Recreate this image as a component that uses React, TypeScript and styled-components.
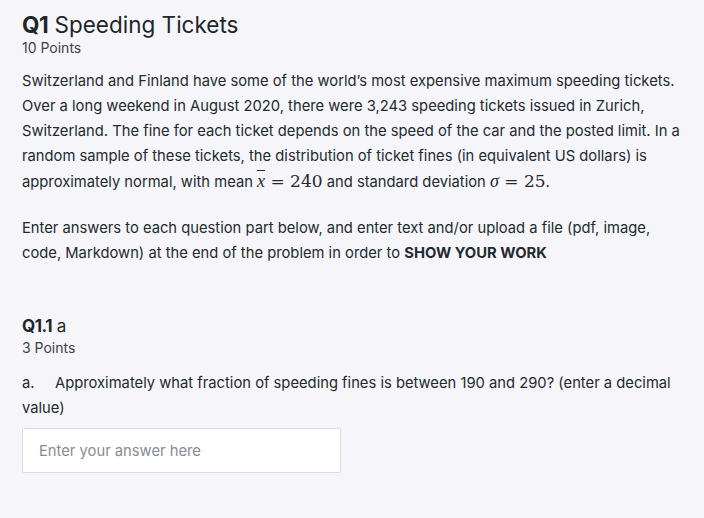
import React from 'react'
import styled, { createGlobalStyle } from 'styled-components'

const GlobalStyle = createGlobalStyle`
  html, body {
    margin: 0;
    padding: 0;
    background: #f6f6fa;
  }
  body {
    font-family: Inter, 'Open Sans', sans-serif;
    color: #222a2e;
  }
`

const Page = styled.div`
  width: 704px;
  height: 518px;
  box-sizing: border-box;
  padding: 11px 18px 0 22px;
  overflow: hidden;
`

const Title = styled.h1<{ size: number }>`
  margin: 0;
  font-size: ${({ size }) => size}px;
  font-weight: 400;
  line-height: 1.2;
  color: #1d2628;

  b {
    font-weight: 700;
    letter-spacing: -0.5px;
  }
`

const Points = styled.div<{ top?: number }>`
  margin-top: ${({ top = 0 }) => top}px;
  font-size: 14px;
  line-height: 19px;
  color: #3c4245;
`

const Para = styled.p<{ top: number }>`
  margin: ${({ top }) => top}px 0 0 0;
  font-size: 14.75px;
  line-height: 25px;

  strong {
    font-weight: 700;
  }
`

const Math = styled.span`
  font-family: 'DejaVu Serif', 'Liberation Serif', serif;
  font-size: 17px;

  i {
    font-family: 'Liberation Serif', serif;
    font-size: 18px;
  }
`

const Bar = styled.span`
  text-decoration: overline;
`

const Section = styled.section`
  margin-top: 50px;
`

const Label = styled.span`
  display: inline-block;
  width: 33px;
`

const Answer = styled.input`
  display: block;
  margin-top: 7px;
  width: 319px;
  height: 45px;
  box-sizing: border-box;
  padding: 0 16px;
  border: 1px solid #dcdde2;
  border-radius: 2px;
  background: #ffffff;
  font-family: Inter, 'Open Sans', sans-serif;
  font-size: 14.75px;
  color: #222a2e;
  outline: none;

  &::placeholder {
    color: #868c92;
  }
`

export default function App() {
  return (
    <>
      <GlobalStyle />
      <Page>
        <Title size={22.5}>
          <b>Q1</b> Speeding Tickets
        </Title>
        <Points>10 Points</Points>
        <Para top={12}>
          Switzerland and Finland have some of the world’s most expensive maximum speeding tickets.
          Over a long weekend in August 2020, there were 3,243 speeding tickets issued in Zurich,
          Switzerland. The fine for each ticket depends on the speed of the car and the posted limit.
          In a random sample of these tickets, the distribution of ticket fines (in equivalent US
          dollars) is approximately normal, with mean{' '}
          <Math>
            <i>
              <Bar>x</Bar>
            </i>{' '}
            = 240
          </Math>{' '}
          and standard deviation{' '}
          <Math>
            <i>σ</i> = 25
          </Math>
          .
        </Para>
        <Para top={21}>
          Enter answers to each question part below, and enter text and/or upload a file (pdf, image,
          code, Markdown) at the end of the problem in order to <strong>SHOW YOUR WORK</strong>
        </Para>
        <Section>
          <Title size={17}>
            <b>Q1.1</b> a
          </Title>
          <Points top={2}>3 Points</Points>
          <Para top={14}>
            <Label>a.</Label>
            Approximately what fraction of speeding fines is between 190 and 290? (enter a decimal
            value)
          </Para>
          <Answer placeholder="Enter your answer here" />
        </Section>
      </Page>
    </>
  )
}
